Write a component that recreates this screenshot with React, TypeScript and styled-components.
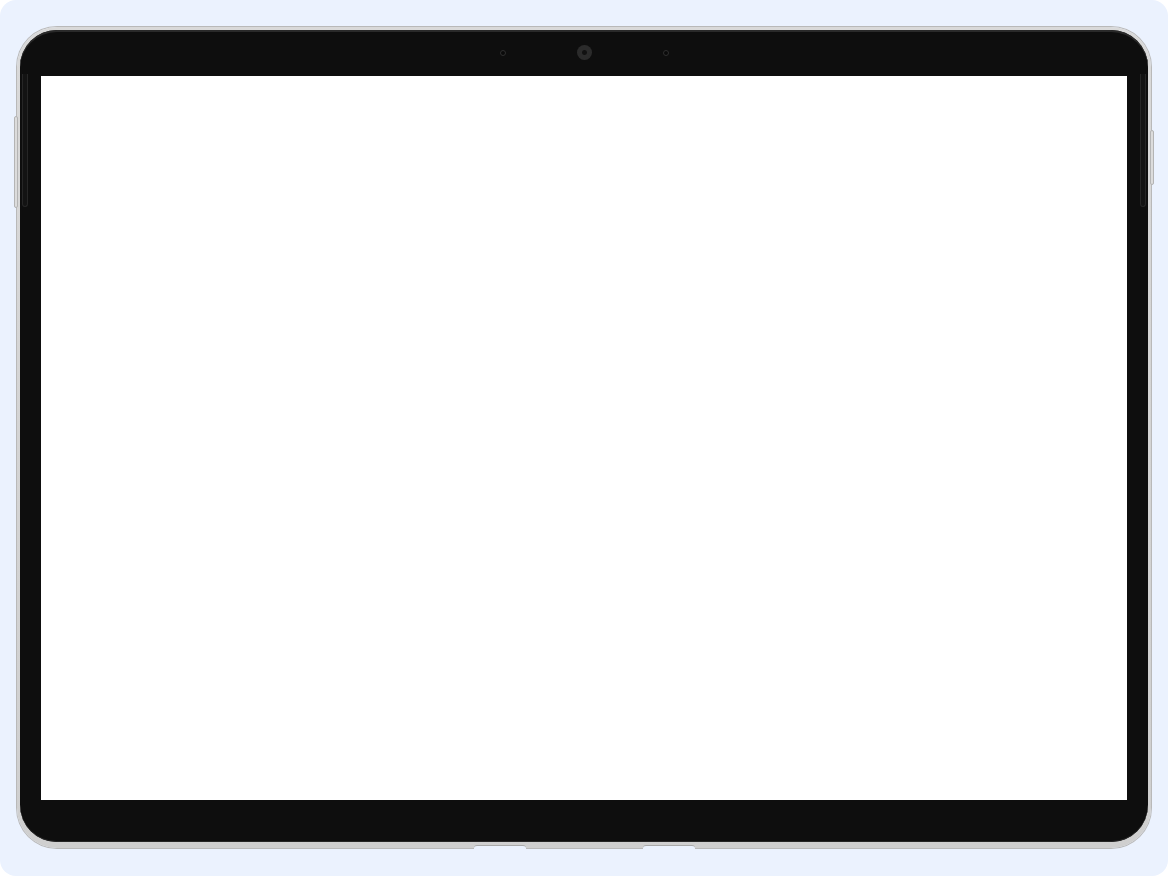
import styled, { createGlobalStyle } from "styled-components";

const GlobalStyle = createGlobalStyle`
  html, body {
    margin: 0;
    padding: 0;
    background: #ffffff;
  }
`;

export default function App() {
  return (
    <>
      <GlobalStyle />
      <Page>
        <Device>
          <SideButton side="left" top={89} height={92} />
          <SideButton side="right" top={103} height={55} />
          <Notch style={{ left: 457 }} />
          <Notch style={{ left: 626 }} />
          <Bezel>
            <Rim side="left" />
            <Rim side="right" />
            <TopBar>
              <Sensor />
              <Camera />
              <Sensor />
            </TopBar>
            <Screen />
            <BottomBar />
          </Bezel>
        </Device>
      </Page>
    </>
  );
}

const Page = styled.div`
  width: 1168px;
  height: 876px;
  box-sizing: border-box;
  padding: 27px 17px 28px;
  display: flex;
  background: #ebf2fe;
  border-radius: 16px;
`;

const Device = styled.div`
  position: relative;
  flex: 1;
  display: flex;
  padding: 3px 3px 6px;
  border-radius: 40px;
  background: linear-gradient(180deg, #d9d9d9 0%, #cfcfcf 100%);
  box-shadow: 0 0 0 1px #b9b9b9;
`;

const SideButton = styled.div<{ side: "left" | "right"; top: number; height: number }>`
  position: absolute;
  top: ${(p) => p.top}px;
  ${(p) => p.side}: -3px;
  width: 4px;
  height: ${(p) => p.height}px;
  background: #dcdcdc;
  border: 1px solid #b4b4b4;
  border-radius: 2px;
  box-sizing: border-box;
`;

const Notch = styled.div`
  position: absolute;
  bottom: -1px;
  width: 52px;
  height: 4px;
  background: #ebf2fe;
  border-top: 1px solid #a9a9a9;
  border-radius: 3px 3px 0 0;
  box-sizing: border-box;
`;

const Bezel = styled.div`
  position: relative;
  flex: 1;
  display: flex;
  flex-direction: column;
  padding: 0 21px;
  background: #0e0e0e;
  border-radius: 37px;
  box-shadow: inset 0 2px 0 #2a2a2a, inset 0 -1px 0 #262626;
`;

const Rim = styled.div<{ side: "left" | "right" }>`
  position: absolute;
  top: 44px;
  ${(p) => p.side}: 2px;
  width: 6px;
  height: 133px;
  background: #131313;
  border: 1px solid #262626;
  border-top: none;
  border-radius: 0 0 4px 4px;
  box-sizing: border-box;
`;

const TopBar = styled.div`
  height: 46px;
  display: flex;
  align-items: center;
  justify-content: center;
  gap: 71px;
  padding-bottom: 1px;
  box-sizing: border-box;
`;

const Camera = styled.div`
  width: 15px;
  height: 15px;
  border-radius: 50%;
  background: radial-gradient(circle at 50% 50%, #111 0 2px, #2b2b2b 3px);
`;

const Sensor = styled.div`
  width: 6px;
  height: 6px;
  border-radius: 50%;
  background: #0a0a0a;
  border: 1px solid #2e2e2e;
  box-sizing: border-box;
`;

const Screen = styled.div`
  flex: 1;
  background: #ffffff;
`;

const BottomBar = styled.div`
  height: 42px;
`;
